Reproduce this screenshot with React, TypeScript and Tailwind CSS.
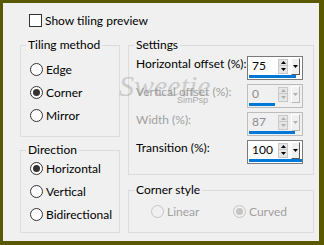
import * as React from "react"

const Tri = ({ dir, color }: { dir: "up" | "down"; color: string }) => (
  <svg width="5" height="3" viewBox="0 0 5 3">
    <path d={dir === "up" ? "M2.5 0 L5 3 L0 3 Z" : "M0 0 L5 0 L2.5 3 Z"} fill={color} />
  </svg>
)

const Radio = ({
  checked,
  disabled,
  label,
}: {
  checked?: boolean
  disabled?: boolean
  label: string
}) => (
  <div className="flex items-center gap-[3px] h-[23px]">
    <span
      className={
        disabled
          ? "w-[13px] h-[13px] rounded-full border border-[#c4c4c4] bg-[#f0f0f0] flex items-center justify-center"
          : "w-[13px] h-[13px] rounded-full border border-[#333333] bg-white flex items-center justify-center"
      }
    >
      {checked && (
        <span
          className={
            disabled
              ? "w-[7px] h-[7px] rounded-full bg-[#c4c4c4]"
              : "w-[7px] h-[7px] rounded-full bg-[#333333]"
          }
        />
      )}
    </span>
    <span className={disabled ? "leading-[16px] text-[#a0a0a0]" : "leading-[16px]"}>{label}</span>
  </div>
)

const SpinBox = ({
  value,
  bar,
  disabled,
}: {
  value: string
  bar: number
  disabled?: boolean
}) => {
  const arrow = disabled ? "#b0b0b0" : "#000000"
  return (
    <div
      className={
        disabled
          ? "shrink-0 w-[56px] h-[24px] border border-[#bcbcbc] bg-[#f0f0f0] flex flex-col"
          : "shrink-0 w-[56px] h-[24px] border border-[#7a7a7a] bg-white flex flex-col"
      }
    >
      <div className="flex items-start h-[18px]">
        <span
          className={
            disabled
              ? "flex-1 pl-[4px] leading-[18px] text-[#8c8c8c]"
              : "flex-1 pl-[4px] leading-[18px] text-black"
          }
        >
          {value}
        </span>
        <div className="w-[10px] mt-[2px] flex flex-col">
          <div className="h-[7px] border border-[#c8c8c8] bg-[#e6e6e6] flex items-center justify-center">
            <Tri dir="up" color={arrow} />
          </div>
          <div className="h-[8px] border border-t-0 border-[#c8c8c8] bg-[#e6e6e6] flex items-center justify-center">
            <Tri dir="down" color={arrow} />
          </div>
        </div>
        <div
          className={
            disabled
              ? "w-[9px] h-[17px] ml-[3px] mt-[1px] mr-[2px] border border-t-white border-l-white border-r-[#b8b8b8] border-b-[#b8b8b8] bg-[#f0f0f0] flex items-center justify-center"
              : "w-[9px] h-[17px] ml-[3px] mt-[1px] mr-[2px] border border-t-white border-l-white border-r-[#5a5a5a] border-b-[#5a5a5a] bg-[#f0f0f0] flex items-center justify-center"
          }
        >
          <Tri dir="down" color={arrow} />
        </div>
      </div>
      <div className="h-[3px] ml-[1px] bg-[#0078d7]" style={{ width: bar }} />
    </div>
  )
}

const SettingRow = ({
  label,
  value,
  bar,
  disabled,
}: {
  label: string
  value: string
  bar: number
  disabled?: boolean
}) => (
  <div className="flex justify-between items-start h-[24px]">
    <span
      className={
        disabled
          ? "whitespace-nowrap leading-[16px] text-[#a0a0a0]"
          : "whitespace-nowrap leading-[16px]"
      }
    >
      {label}
    </span>
    <SpinBox value={value} bar={bar} disabled={disabled} />
  </div>
)

export default function App() {
  return (
    <div className="relative w-[324px] h-[245px] bg-[#f0f0f0] border-[#5a5900] border-t-[3px] border-l-[3px] border-r-[5px] border-b-[4px] font-['Lato','Segoe_UI',sans-serif] text-[12px] text-black pl-[17px] pr-[5px] pt-[11px]">
      <label className="flex items-center gap-[3px] ml-[9px] h-[13px]">
        <span className="w-[13px] h-[13px] border border-[#333333] bg-white" />
        <span className="leading-[16px]">Show tiling preview</span>
      </label>

      <div className="flex gap-[8px] mt-[11px]">
        <div className="w-[100px] flex flex-col">
          <fieldset className="h-[99px] border border-[#dcdcdc]">
            <legend className="ml-[5px] px-[2px] leading-[14px]">Tiling method</legend>
            <div className="flex flex-col mt-[6px] pl-[9px]">
              <Radio label="Edge" />
              <Radio label="Corner" checked />
              <Radio label="Mirror" />
            </div>
          </fieldset>
          <fieldset className="h-[90px] mt-[6px] border border-[#dcdcdc]">
            <legend className="ml-[5px] px-[2px] leading-[14px]">Direction</legend>
            <div className="flex flex-col pl-[9px]">
              <Radio label="Horizontal" checked />
              <Radio label="Vertical" />
              <Radio label="Bidirectional" />
            </div>
          </fieldset>
        </div>

        <div className="w-[186px] flex flex-col">
          <fieldset className="h-[137px] border border-[#dcdcdc]">
            <legend className="ml-[5px] px-[2px] leading-[14px]">Settings</legend>
            <div className="flex flex-col gap-[4px] mt-[4px] pl-[7px] pr-[10px]">
              <SettingRow label="Horizontal offset (%):" value="75" bar={47} />
              <SettingRow label="Vertical offset (%):" value="0" bar={26} disabled />
              <SettingRow label="Width (%):" value="87" bar={46} disabled />
              <SettingRow label="Transition (%):" value="100" bar={53} />
            </div>
          </fieldset>
          <fieldset className="h-[50px] mt-[8px] border border-[#dcdcdc]">
            <legend className="ml-[5px] px-[2px] leading-[14px]">Corner style</legend>
            <div className="flex mt-[3px] pl-[22px]">
              <div className="w-[82px]">
                <Radio label="Linear" disabled />
              </div>
              <Radio label="Curved" checked disabled />
            </div>
          </fieldset>
        </div>
      </div>

      <div className="absolute left-[116px] top-[67px] pointer-events-none text-[#8a8a8a] opacity-35">
        <span className="font-['Liberation_Serif',serif] italic text-[30px] leading-[32px]">Sweetie</span>
      </div>
      <span className="absolute left-[174px] top-[92px] pointer-events-none font-['Liberation_Sans',sans-serif] text-[9px] leading-[10px] text-[#8a8a8a] opacity-70">
        SimPsp
      </span>
    </div>
  )
}
